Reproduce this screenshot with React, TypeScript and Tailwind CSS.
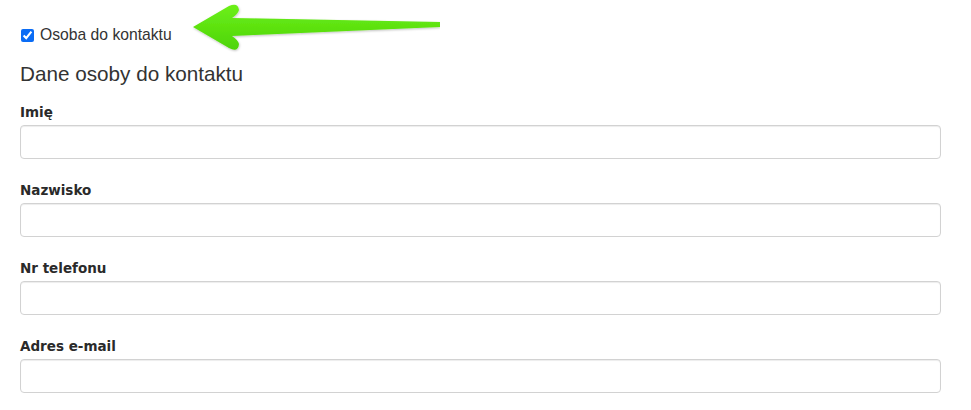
import React from "react";

const fields = ["Imię", "Nazwisko", "Nr telefonu", "Adres e-mail"];

function Arrow() {
  return (
    <svg width="260" height="56" viewBox="180 0 260 56" className="absolute left-[180px] top-0" aria-hidden>
      <defs>
        <linearGradient id="g" x1="0" y1="0" x2="0" y2="1">
          <stop offset="0" stopColor="#6cf01a" />
          <stop offset="1" stopColor="#4ed406" />
        </linearGradient>
        <filter id="s" x="-10%" y="-30%" width="120%" height="160%">
          <feDropShadow dx="0.5" dy="1" stdDeviation="1" floodColor="#000" floodOpacity="0.25" />
        </filter>
      </defs>
      <path
        d="M193,27 L229,6 Q238,2 239,10 Q238,14 232,18 L440,22 L440,27 L232,36 Q238,40 239,44 Q238,53 229,48 Z"
        fill="url(#g)"
        filter="url(#s)"
      />
    </svg>
  );
}

export default function App() {
  return (
    <div className="relative w-[971px] h-[410px] bg-white pl-5 pr-[30px] text-[#333]" style={{ fontFamily: '"Liberation Sans", Arial, sans-serif' }}>
      <Arrow />
      <div className="pt-[25px] flex items-center h-[45px]">
        <input type="checkbox" defaultChecked className="w-[13px] h-[13px] ml-[1px] accent-[#0a6cf5] m-0" />
        <span className="ml-[6px] text-[15.7px] leading-5">Osoba do kontaktu</span>
      </div>
      <h3 className="mt-[18px] text-[20.7px] leading-[22px] font-normal">Dane osoby do kontaktu</h3>
      <div className="mt-[15px] flex flex-col gap-[19px]">
        {fields.map((f) => (
          <div key={f} className="flex flex-col">
            <label className="pt-[2px] text-[13.5px] leading-5 font-bold text-[#2a2a2a]" style={{ fontFamily: '"DejaVu Sans", Verdana, sans-serif' }}>
              {f}
            </label>
            <input
              type="text"
              className="mt-[3px] w-[921px] h-[34px] rounded-[4px] border border-[#d2d2d2] bg-white shadow-[inset_0_1px_1px_rgba(0,0,0,0.075)] outline-none"
            />
          </div>
        ))}
      </div>
    </div>
  );
}
